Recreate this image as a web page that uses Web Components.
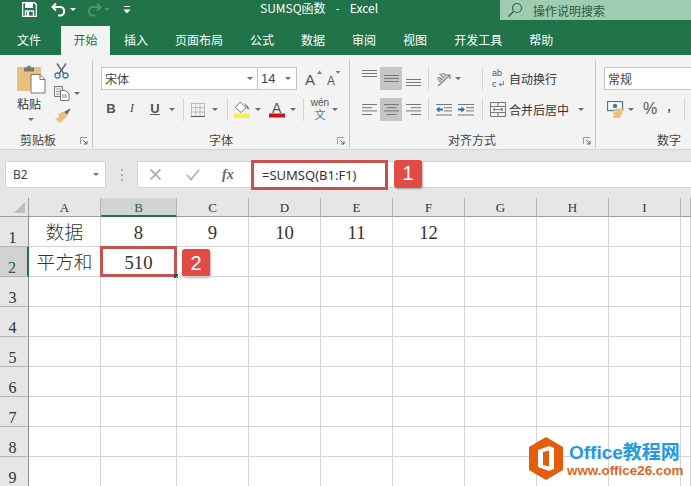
<!DOCTYPE html>
<html lang="zh">
<head>
<meta charset="utf-8">
<title>SUMSQ函数 - Excel</title>
<style>
html, body { margin: 0; height: 100%; overflow: hidden; background: #fff; }
body { font: 12px "Noto Sans CJK SC", "Liberation Sans", sans-serif; color: #333; }
</style>
</head>
<body>
<x-titlebar></x-titlebar>
<x-tabs></x-tabs>
<x-ribbon></x-ribbon>
<x-formula></x-formula>
<x-sheet></x-sheet>
<x-logo></x-logo>
<script>
// iconos de la cinta, todos dibujados a mano
const ICONOS = {
	save: `<svg width="15" height="15" viewBox="0 0 15 15"><path d="M.5.5h11.5l2.500 2.500v11.500H.5z" fill="none" stroke="#fff" stroke-width="1.600"/><rect x="3" y="1" width="8" height="5" fill="#fff"/><rect x="3.500" y="9" width="8" height="5.500" fill="none" stroke="#fff" stroke-width="1.400"/><rect x="5" y="10" width="2" height="4" fill="#fff"/></svg>`,
	undo: `<svg width="16" height="15" viewBox="0 0 16 15"><path d="M5 1.500 1.500 5 5 8.500M2 5h7.500a4.300 4.300 0 0 1 0 8.500H7" fill="none" stroke="#fff" stroke-width="2"/></svg>`,
	redo: `<svg width="16" height="15" viewBox="0 0 16 15"><path d="M11 1.500 14.500 5 11 8.500M14 5H6.500a4.300 4.300 0 0 0 0 8.500H9" fill="none" stroke="#4d9570" stroke-width="2"/></svg>`,
	qat: `<svg width="8" height="9" viewBox="0 0 8 9"><path d="M1 1.500h6" stroke="#fff"/><path d="M.5 4.500h7L4 8.500z" fill="#fff"/></svg>`,
	lupa: `<svg width="16" height="16" viewBox="0 0 16 16"><circle cx="10" cy="6" r="4.500" fill="none" stroke="#35684c" stroke-width="1.200"/><path d="M6.700 9.300 1.500 14.500" stroke="#35684c" stroke-width="1.500"/></svg>`,
	paste: `<svg width="30" height="30" viewBox="0 0 30 30"><rect x="1" y="3" width="24" height="24" rx="1" fill="#e8c07d"/><path d="M8 3.500h3a2 2 0 0 1 4 0h3v4H8z" fill="#777"/><path d="M15 10.500h9l5 5v13.500H15z" fill="#fff" stroke="#777"/><path d="M24 10.500v5h5" fill="none" stroke="#777"/></svg>`,
	cut: `<svg width="15" height="16" viewBox="0 0 15 16"><path d="M3 .5 10 11M12 .5 5 11" stroke="#666" stroke-width="1.400" fill="none"/><circle cx="3.500" cy="12.500" r="2.500" fill="none" stroke="#3f78a8" stroke-width="1.300"/><circle cx="11.500" cy="12.500" r="2.500" fill="none" stroke="#3f78a8" stroke-width="1.300"/></svg>`,
	copy: `<svg width="16" height="15" viewBox="0 0 16 15"><path d="M.5.5h8v10h-8z" fill="#f3f3f3" stroke="#777"/><path d="M2 3h5M2 5.500h5M2 8h5" stroke="#999"/><path d="M6.500 4.500h5l3.500 3.500v6.500H6.500z" fill="#fff" stroke="#777"/><path d="M8 9h5M8 11h5" stroke="#888"/></svg>`,
	brush: `<svg width="17" height="15" viewBox="0 0 17 15"><path d="M10 4 16 .5l.5.800L13 7z" fill="#6b6b6b"/><path d="M9 3.500 13.500 8 9 12 6 15 1 11 3 10 5 9 4.500 6z" fill="#e8c07d"/></svg>`,
	grow: `<svg width="18" height="19" viewBox="0 0 18 19"><text x="0" y="15.500" font-family="Liberation Sans" font-size="15" fill="#555">A</text><path d="M12 5l2.500-3.500L17 5z" fill="#5a87ad"/></svg>`,
	shrink: `<svg width="16" height="19" viewBox="0 0 16 19"><text x="0" y="15.500" font-family="Liberation Sans" font-size="12" fill="#555">A</text><path d="M8.500 2h5L11 5z" fill="#5a87ad"/></svg>`,
	border: `<svg width="14" height="14" viewBox="0 0 14 14"><path d="M.5.500h13v13H.5zM.5 4.700h13M.5 9h13M4.700.5v13M9 .5v13" fill="none" stroke="#8a8a8a" stroke-dasharray="1 1"/><path d="M0 13.500h14" stroke="#555"/></svg>`,
	fill: `<svg width="17" height="17" viewBox="0 0 17 17"><path d="M6 1 1.500 6.500 7 11.500l5-5z" fill="#fff" stroke="#777"/><path d="M10 1.500l4.500 4.500.5 3-2-1.500z" fill="#5f7e98"/><rect x="0" y="12.500" width="16" height="4.500" fill="#f5f04b"/></svg>`,
	color: `<svg width="17" height="17" viewBox="0 0 17 17"><text x="3" y="12" font-family="Liberation Sans" font-size="14" fill="#555">A</text><rect x="0" y="12.500" width="16" height="4" fill="#c8131b"/></svg>`,
	top: `<svg width="15" height="8" viewBox="0 0 15 8"><path d="M0 .5h15M0 3.500h15M0 6.500h15" stroke="#777"/></svg>`,
	left: `<svg width="15" height="12" viewBox="0 0 15 12"><path d="M0 .5h15M0 3.700h10M0 6.900h15M0 10.500h10" stroke="#777"/></svg>`,
	center: `<svg width="15" height="12" viewBox="0 0 15 12"><path d="M0 .5h15M2.500 3.700h10M0 6.900h15M2.500 10.500h10" stroke="#777"/></svg>`,
	right: `<svg width="15" height="12" viewBox="0 0 15 12"><path d="M0 .5h15M5 3.700h10M0 6.900h15M5 10.500h10" stroke="#777"/></svg>`,
	orient: `<svg width="20" height="20" viewBox="0 0 20 20"><text x="2" y="11" font-family="Liberation Sans" font-size="9" fill="#666" transform="rotate(-45 7 8)">ab</text><path d="M4 17 16 6M12 6h4v4" fill="none" stroke="#5a87ad" stroke-width="1.100"/></svg>`,
	outdent: `<svg width="16" height="12" viewBox="0 0 16 12"><path d="M0 .5h16M8 3.700h8M8 6.900h8M0 11h16" stroke="#777"/><path d="M0 5.500 3.500 2.500v2H7v2H3.500v2z" fill="#2f72a8"/></svg>`,
	indent: `<svg width="16" height="12" viewBox="0 0 16 12"><path d="M0 .5h16M8 3.700h8M8 6.900h8M0 11h16" stroke="#777"/><path d="M7 5.500 3.500 2.500v2H0v2h3.500v2z" fill="#2f72a8"/></svg>`,
	wrapa: `<svg width="7" height="6" viewBox="0 0 7 6"><path d="M5.500 0v3.500H1M3 2 1 3.500 3 5" fill="none" stroke="#4a7ea8" stroke-width=".9"/></svg>`,
	merge: `<svg width="16" height="15" viewBox="0 0 16 15"><path d="M.5.500h15v14H.5zM.5 4.500h15M.5 10.500h15M8 .5v4M8 10.500v4" fill="none" stroke="#777"/><path d="M3 7.500h10M5 6 3 7.500 5 9M11 6l2 1.500L11 9" fill="none" stroke="#5a87ad"/></svg>`,
	money: `<svg width="18" height="17" viewBox="0 0 18 17"><rect x=".5" y=".5" width="15" height="9" fill="#fff" stroke="#3b7cae" stroke-width="1.300"/><circle cx="8" cy="5" r="2.200" fill="#3b7cae"/><ellipse cx="12" cy="9" rx="5" ry="1.800" fill="#e8c07d"/><ellipse cx="11" cy="12.500" rx="5" ry="1.800" fill="#e8c07d"/><ellipse cx="10" cy="15.500" rx="4" ry="1.500" fill="#e8c07d"/></svg>`,
	cross: `<svg width="13" height="13" viewBox="0 0 13 13"><path d="M1.500 1.500l10 10M11.500 1.500l-10 10" stroke="#b4b4b4" stroke-width="1.800"/></svg>`,
	check: `<svg width="14" height="12" viewBox="0 0 14 12"><path d="M1 6l4 4.500L13 1" fill="none" stroke="#b4b4b4" stroke-width="1.800"/></svg>`
};

class XIco extends HTMLElement {
	constructor() {
		super();
		this.attachShadow({mode: 'open'});
		this.shadowRoot.innerHTML = `<style>:host{display:inline-flex;align-items:center;justify-content:center;flex:none}svg{display:block}</style>`;
	}
	connectedCallback() {
		this.shadowRoot.innerHTML += ICONOS[this.getAttribute('name')] || '';
	}
}
customElements.define('x-ico', XIco);

class XCaret extends HTMLElement {
	constructor() {
		super();
		this.attachShadow({mode: 'open'});
		this.shadowRoot.innerHTML = `<style>
:host{display:inline-flex;align-items:center;justify-content:center;flex:none;width:10px}
i{display:block;border:3px solid transparent;border-top:3px solid var(--caret,#6d6d6d);border-bottom:0}
</style><i></i>`;
	}
}
customElements.define('x-caret', XCaret);

class XTitlebar extends HTMLElement {
	constructor() {
		super();
		this.attachShadow({mode: 'open'});
		this.shadowRoot.innerHTML = `<style>
:host{display:flex;height:26px;background:#21734a;color:#fff;padding-left:22px;box-sizing:border-box;--caret:#fff}
.q{display:flex;align-items:center;height:17px;padding-top:1px}
.dim{--caret:#4d9570}
.t{margin-left:129px;height:15px;line-height:15px;white-space:nowrap}
.t span{margin:0 10px}
.s{margin-left:auto;width:191px;height:20px;background:#9fcbb1;color:#2f5a43;display:flex;align-items:center;gap:10px;padding-left:7px;box-sizing:border-box}
</style>
<div class="q">
	<x-ico name="save"></x-ico>
	<x-ico name="undo" style="margin-left:14px"></x-ico><x-caret style="margin-left:1px"></x-caret>
	<x-ico name="redo" style="margin-left:8px"></x-ico><x-caret class="dim"></x-caret>
	<x-ico name="qat" style="margin-left:11px"></x-ico>
</div>
<div class="t">SUMSQ函数<span>-</span>Excel</div>
<div class="s"><x-ico name="lupa"></x-ico><span>操作说明搜索</span></div>`;
	}
}
customElements.define('x-titlebar', XTitlebar);

class XTabs extends HTMLElement {
	constructor() {
		super();
		this.attachShadow({mode: 'open'});
		const tabs = ['文件', '开始', '插入', '页面布局', '公式', '数据', '审阅', '视图', '开发工具', '帮助'];
		this.shadowRoot.innerHTML = `<style>
:host{display:flex;height:29px;background:#21734a;color:#fff;padding-left:5px;gap:3px;box-sizing:border-box}
div{padding:0 12px;line-height:28px;height:29px;box-sizing:border-box}
.on{background:#f3f3f3;color:#21734a;margin-left:5px;margin-right:-1px;padding:0 12.5px}
</style>` + tabs.map((t, i) => `<div class="${i == 1 ? 'on' : ''}">${t}</div>`).join('');
	}
}
customElements.define('x-tabs', XTabs);

class XGroup extends HTMLElement {
	constructor() {
		super();
		this.attachShadow({mode: 'open'});
		this.shadowRoot.innerHTML = `<style>
:host{display:flex;flex-direction:column;flex:none;box-sizing:border-box;height:88px;margin-top:5px;border-right:1px solid #c6c6c6}
.c{flex:1;padding-top:7px;min-height:0}
.l{height:19px;display:flex;align-items:center;color:#444;line-height:17px;padding-top:2px;box-sizing:border-box}
.l span{margin-left:var(--lx)}
svg{margin-left:auto;margin-right:4px;margin-top:3px}
</style>
<div class="c"><slot></slot></div>
<div class="l"><span></span><svg width="8" height="8" viewBox="0 0 8 8"><path d="M.5 7V.5H7" fill="none" stroke="#999"/><path d="M3 3l4 4M7 4v3H4" fill="none" stroke="#666"/></svg></div>`;
	}
	connectedCallback() {
		this.shadowRoot.querySelector('span').textContent = this.getAttribute('label');
		if (this.hasAttribute('nolaunch')) this.shadowRoot.querySelector('svg').remove();
	}
}
customElements.define('x-group', XGroup);

class XRibbon extends HTMLElement {
	constructor() {
		super();
		this.attachShadow({mode: 'open'});
		this.shadowRoot.innerHTML = `<style>
:host{display:flex;height:95px;background:#f3f3f3;border-bottom:1px solid #d4d4d4;box-sizing:border-box;overflow:hidden}
.row{display:flex;align-items:center;height:23px}
.row+.row{margin-top:8px}
.sel{background:#fff;border:1px solid #c6c6c6;height:23px;box-sizing:border-box;display:flex;align-items:center;color:#444}
.sep{width:1px;height:23px;background:#d4d4d4;flex:none}
.b{display:flex;align-items:center;justify-content:center;flex:none;height:23px}
.on{background:#c6c6c6}
b,i,u{font-family:"Liberation Sans",sans-serif;color:#555;font-size:13px;margin-bottom:3px}
.i{font-family:"Liberation Serif",serif}
.clip{display:flex;padding-left:16px}
.pc{width:30px;display:flex;flex-direction:column;align-items:center}
.pc span{margin-top:1px;line-height:17px;color:#333;font-size:12px;margin-left:-4px}
.sm{display:flex;flex-direction:column;margin-left:8px;margin-top:-7px}
.sm>*{display:flex;align-items:center;height:22px}
.wen{display:flex;flex-direction:column;align-items:center;font:10px/10px "Liberation Sans",sans-serif;color:#555;margin-top:-2px}
.wen em{display:block;font:normal 11px/12px "Noto Sans CJK SC",sans-serif;color:#3b78a8}
.wr{display:flex;flex-direction:column;font:9px/10px "Liberation Sans",sans-serif;color:#555;margin-left:9px;width:14px}
.wr div{display:flex;align-items:center;height:10.500px}
</style>
<x-group label="剪贴板" style="width:93px;--lx:20px">
	<div class="clip">
		<div class="pc" style="margin-top:-3px"><x-ico name="paste"></x-ico><span>粘贴</span><x-caret style="margin-top:5px;height:5px"></x-caret></div>
		<div class="sm">
			<div><x-ico name="cut"></x-ico></div>
			<div><x-ico name="copy"></x-ico><x-caret style="margin-left:2px"></x-caret></div>
			<div><x-ico name="brush"></x-ico></div>
		</div>
	</div>
</x-group>
<x-group label="字体" style="width:257px;--lx:108px;padding-left:8px">
	<div class="row">
		<div class="sel" style="width:157px;padding-left:3px">宋体<x-caret style="margin-left:auto;margin-right:2px"></x-caret></div>
		<div class="sel" style="width:39px;padding-left:3px;font-family:'Liberation Sans',sans-serif;font-size:13px;border-left:0">14<x-caret style="margin-left:auto;margin-right:3px"></x-caret></div>
		<x-ico name="grow" style="margin-left:8px"></x-ico>
		<x-ico name="shrink" style="margin-left:4px"></x-ico>
	</div>
	<div class="row">
		<div class="b" style="width:20px"><b>B</b></div>
		<div class="b i" style="width:22px"><i class="i">I</i></div>
		<div class="b" style="width:24px"><u style="font-weight:700">U</u></div>
		<x-caret></x-caret>
		<div class="sep" style="margin:0 6px"></div>
		<div class="b" style="width:16px"><x-ico name="border"></x-ico></div>
		<x-caret style="width:18px"></x-caret>
		<div class="sep" style="margin-left:3px"></div>
		<div class="b" style="width:20px;margin-left:4px"><x-ico name="fill"></x-ico></div>
		<x-caret style="width:12px"></x-caret>
		<div class="b" style="width:18px;margin-left:4px"><x-ico name="color"></x-ico></div>
		<x-caret style="width:14px"></x-caret>
		<div class="sep" style="margin-left:3px"></div>
		<div class="b" style="width:22px;margin-left:5px"><div class="wen"><span>wén</span><em>文</em></div></div>
		<x-caret style="width:8px"></x-caret>
	</div>
</x-group>
<x-group label="对齐方式" style="width:246px;--lx:90px;padding-left:8px">
	<div class="row">
		<div class="b" style="width:22px;align-items:flex-start;padding-top:3px;box-sizing:border-box"><x-ico name="top"></x-ico></div>
		<div class="b on" style="width:22px"><x-ico name="top"></x-ico></div>
		<div class="b" style="width:22px;align-items:flex-end;padding-bottom:3px;box-sizing:border-box"><x-ico name="top"></x-ico></div>
		<div class="sep" style="margin-left:4px"></div>
		<div class="b" style="width:53px;justify-content:flex-start;padding-left:5px;box-sizing:border-box"><x-ico name="orient"></x-ico><x-caret style="margin-left:-1px"></x-caret></div>
		<div class="sep"></div>
		<div class="wr"><div>ab</div><div>c<x-ico name="wrapa" style="margin-left:1px"></x-ico></div></div>
		<span style="margin-left:3px;color:#333">自动换行</span>
	</div>
	<div class="row">
		<div class="b" style="width:22px"><x-ico name="left"></x-ico></div>
		<div class="b on" style="width:22px"><x-ico name="center"></x-ico></div>
		<div class="b" style="width:22px"><x-ico name="right"></x-ico></div>
		<div class="sep" style="margin-left:4px"></div>
		<div class="b" style="width:53px;justify-content:flex-start;padding-left:7px;gap:6px;box-sizing:border-box"><x-ico name="outdent"></x-ico><x-ico name="indent"></x-ico></div>
		<div class="sep"></div>
		<x-ico name="merge" style="margin-left:7px"></x-ico>
		<span style="margin-left:3px;color:#333">合并后居中</span>
		<x-caret style="margin-left:7px"></x-caret>
	</div>
</x-group>
<x-group label="数字" nolaunch style="flex:1;border-right:0;--lx:53px;padding-left:8px">
	<div class="row">
		<div class="sel" style="width:100px;padding-left:3px">常规</div>
	</div>
	<div class="row">
		<x-ico name="money" style="margin-left:3px"></x-ico>
		<x-caret style="margin-left:1px"></x-caret>
		<span style="margin-left:7px;font:16px 'Liberation Sans',sans-serif;color:#555;margin-bottom:2px">%</span>
		<b style="margin-left:10px;font-size:13px;margin-bottom:6px">,</b>
		<div class="sep" style="margin-left:13px"></div>
	</div>
</x-group>`;
	}
}
customElements.define('x-ribbon', XRibbon);

class XCallout extends HTMLElement {
	constructor() {
		super();
		this.attachShadow({mode: 'open'});
		this.shadowRoot.innerHTML = `<style>
:host{display:flex;align-items:center;justify-content:center;width:28px;height:28px;background:#e14a45;color:#fff;border-radius:3px;font:20px "Liberation Sans",sans-serif;box-shadow:1px 1px 2px rgba(0,0,0,.3);flex:none}
</style><slot></slot>`;
	}
}
customElements.define('x-callout', XCallout);

class XFormula extends HTMLElement {
	constructor() {
		super();
		this.attachShadow({mode: 'open'});
		this.shadowRoot.innerHTML = `<style>
:host{display:flex;height:48px;background:#e6e6e6;padding:11px 0 10px 5px;box-sizing:border-box;color:#444}
.n,.f,.v{height:27px;background:#fff;box-sizing:border-box;border:1px solid #d4d4d4;display:flex;align-items:center;flex:none}
.n{width:101px;padding-left:7px;font-family:"Noto Sans","Liberation Sans",sans-serif}
.n x-caret{margin-left:auto;margin-right:4px;--caret:#777}
.d{width:31px;flex:none;display:flex;flex-direction:column;align-items:center;justify-content:center;gap:3px}
.d i{width:2px;height:2px;background:#aaa}
.f{width:109px;border-right:0}
.f span{font:italic 700 14px "Liberation Serif",serif;color:#666;margin-left:22px}
.v{flex:1;border-left:0;border-right:0}
.red{width:137px;height:30px;border:3px solid #c9504f;box-sizing:border-box;margin-left:5px;padding-left:8px;display:flex;align-items:center;font:13px "Noto Sans","Liberation Sans",sans-serif;color:#333;flex:none}
x-callout{margin-left:6px;margin-top:-2px}
</style>
<div class="n">B2<x-caret></x-caret></div>
<div class="d"><i></i><i></i><i></i></div>
<div class="f"><x-ico name="cross" style="margin-left:11px"></x-ico><x-ico name="check" style="margin-left:24px"></x-ico><span>fx</span></div>
<div class="v"><div class="red">=SUMSQ(B1:F1)</div><x-callout>1</x-callout></div>`;
	}
}
customElements.define('x-formula', XFormula);

class XSheet extends HTMLElement {
	constructor() {
		super();
		this.attachShadow({mode: 'open'});
		const cols = ['A', 'B', 'C', 'D', 'E', 'F', 'G', 'H', 'I', ''];
		const datos = {
			1: ['数据', '8', '9', '10', '11', '12'],
			2: ['平方和', '510']
		};
		let h = `<div class="ch corner"><svg width="12" height="12" viewBox="0 0 12 12"><path d="M11 0v11H0z" fill="#bdbdbd"/></svg></div>`;
		cols.forEach((c, i) => { h += `<div class="ch ${i == 1 ? 'act' : ''}">${c}</div>`; });
		for (let r = 1; r <= 9; r++) {
			h += `<div class="rh ${r == 2 ? 'act' : ''}">${r}</div>`;
			cols.forEach((c, i) => {
				const v = (datos[r] && datos[r][i]) || '';
				const sel = r == 2 && i == 1;
				h += `<div class="c">${v}${sel ? '<div class="box"></div><x-callout class="co">2</x-callout>' : ''}</div>`;
			});
		}
		this.shadowRoot.innerHTML = `<style>
:host{display:grid;grid-template-columns:29px 72px 76px repeat(7,72px) 1fr;grid-template-rows:19px repeat(9,30px);height:288px;overflow:hidden;background:#fff}
.ch{background:#e6e6e6;border-right:1px solid #b5b5b5;border-bottom:1px solid #9c9c9c;box-sizing:border-box;display:flex;align-items:center;justify-content:center;font:13px "Liberation Serif",serif;color:#333;padding-top:2px}
.ch.corner{justify-content:flex-end;padding:0 2px 2px 0;align-items:flex-end;border-right-color:#9c9c9c}
.ch.act{background:#d2d2d2;border-bottom:2px solid #21734a;color:#21633f}
.rh{background:#e6e6e6;border-right:1px solid #8f8f8f;border-bottom:1px solid #b5b5b5;box-sizing:border-box;display:flex;align-items:flex-end;justify-content:center;font:16px/16px "Liberation Serif",serif;color:#333;padding:0 3px 0 0}
.rh.act{background:#d2d2d2;border-right:2px solid #21734a;color:#21633f}
.c{border-right:1px solid #d4d4d4;border-bottom:1px solid #d4d4d4;box-sizing:border-box;display:flex;align-items:center;justify-content:center;position:relative;white-space:nowrap;font:300 18.67px/29px "Liberation Serif","Noto Sans CJK SC",serif;color:#333;padding-top:1px}
.box{position:absolute;left:-1px;top:-1px;width:77px;height:31px;border:3px solid #c9504f;box-sizing:border-box}
.box::after{content:"";position:absolute;right:-4px;bottom:-4px;width:4px;height:4px;background:#444}
.co{position:absolute;left:81px;top:2px}
</style>` + h;
	}
}
customElements.define('x-sheet', XSheet);

class XLogo extends HTMLElement {
	constructor() {
		super();
		this.attachShadow({mode: 'open'});
		this.shadowRoot.innerHTML = `<style>
:host{position:absolute;left:528px;top:437px;display:flex;align-items:center;gap:5px;white-space:nowrap}
.t{display:flex;flex-direction:column;padding-top:3px}
.a{font:700 19px/20px "Liberation Sans","Noto Sans CJK SC",sans-serif;color:#1f9be3}
.b{font:700 13.400px/15px "Liberation Sans",sans-serif;color:#e2641c;margin-left:-2px}
</style>
<svg width="36" height="43" viewBox="0 0 36 43"><path d="M18 0 35 10v23L18 43 1 33V10z" fill="#e65c0f"/><path d="M21 9 10 13v17l11 4 5-2V11z" fill="#fff"/><path d="M15 15l6-1.500v16L15 28z" fill="#e65c0f"/></svg>
<div class="t"><div class="a">Office教程网</div><div class="b">www.office26.com</div></div>`;
	}
}
customElements.define('x-logo', XLogo);
</script>
</body>
</html>
